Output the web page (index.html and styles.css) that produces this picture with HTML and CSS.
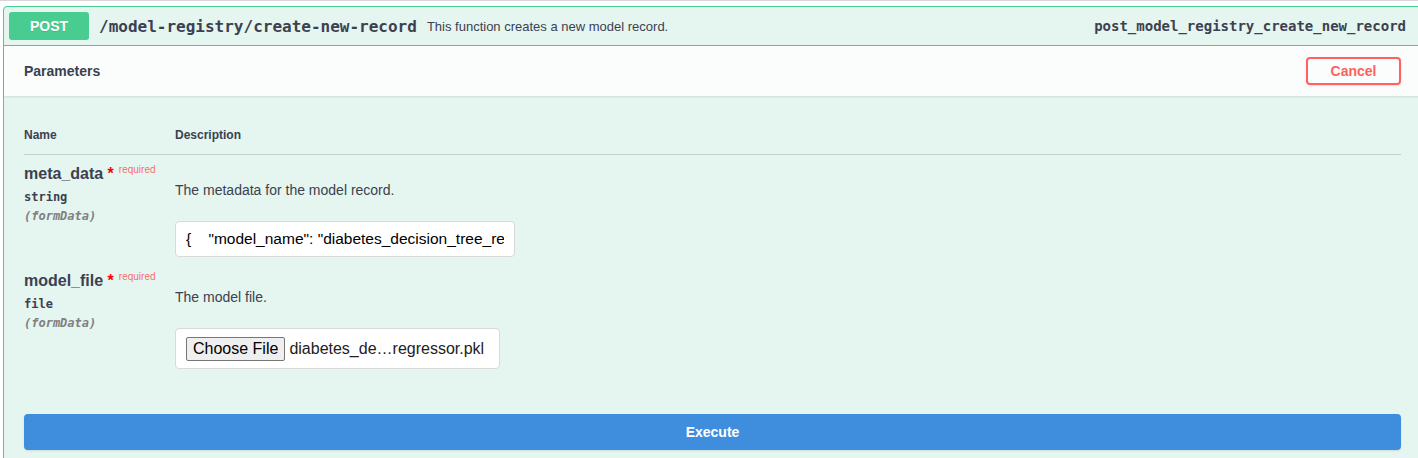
FILE: index.html
```html
<!DOCTYPE html>
<html>
<head>
<meta charset="utf-8">
<link rel="stylesheet" href="styles.css">
</head>
<body>
<div class="topline"></div>
<div class="opblock">
  <div class="summary">
    <span class="method">POST</span>
    <span class="path">/model-registry/create-new-record</span>
    <span class="summary-desc">This function creates a new model record.</span>
    <span class="opid">post_model_registry_create_new_record</span>
  </div>
  <div class="section-header">
    <h4 class="section-title">Parameters</h4>
    <button class="btn-cancel">Cancel</button>
  </div>
  <div class="table-container">
    <div class="thead">
      <div class="col-name th">Name</div>
      <div class="col-desc th">Description</div>
    </div>
    <div class="row">
      <div class="col-name">
        <div class="param-name">meta_data<span class="star">&nbsp;*</span><span class="req">required</span></div>
        <div class="param-type">string</div>
        <div class="param-in">(formData)</div>
      </div>
      <div class="col-desc">
        <p class="desc">The metadata for the model record.</p>
        <div class="text-input"><span class="text-value">{&nbsp;&nbsp;&nbsp;&nbsp;"model_name": "diabetes_decision_tree_regressor"</span></div>
      </div>
    </div>
    <div class="row">
      <div class="col-name">
        <div class="param-name">model_file<span class="star">&nbsp;*</span><span class="req">required</span></div>
        <div class="param-type">file</div>
        <div class="param-in">(formData)</div>
      </div>
      <div class="col-desc">
        <p class="desc">The model file.</p>
        <div class="file-input"><span class="choose">Choose File</span><span class="fname">diabetes_de…regressor.pkl</span></div>
      </div>
    </div>
  </div>
  <div class="execute-wrapper">
    <button class="btn-execute">Execute</button>
  </div>
</div>
</body>
</html>
```

FILE: styles.css
```css
html, body {
  margin: 0;
  padding: 0;
  overflow: hidden;
  background: #ffffff;
  font-family: "Liberation Sans", Arial, sans-serif;
  color: #3b4151;
}
.topline {
  height: 1px;
  background: #d6d6d6;
}
.opblock {
  margin: 5px 0 0 3px;
  width: 1417px;
  min-height: 470px;
  border: 1px solid #49cc90;
  border-radius: 4px;
  background: #e5f5ef;
}
.summary {
  display: flex;
  align-items: center;
  padding: 5px;
  border-bottom: 1px solid #49cc90;
}
.method {
  width: 80px;
  height: 28px;
  display: flex;
  align-items: center;
  justify-content: center;
  background: #49cc90;
  color: #fff;
  border-radius: 3px;
  font-size: 14px;
  font-weight: 700;
  text-shadow: 0 1px 0 rgba(0,0,0,.1);
}
.path {
  padding: 0 10px;
  font-family: "DejaVu Sans Mono", monospace;
  font-size: 16px;
  font-weight: 700;
  color: #3b4151;
}
.summary-desc {
  font-size: 13px;
  color: #3b4151;
  flex: 1;
}
.opid {
  font-family: "DejaVu Sans Mono", monospace;
  font-size: 14px;
  font-weight: 700;
  padding: 0 10px;
  color: #3b4151;
}
.section-header {
  display: flex;
  align-items: center;
  justify-content: space-between;
  min-height: 50px;
  padding: 0 20px;
  background: rgba(255,255,255,.8);
  box-shadow: 0 1px 2px rgba(0,0,0,.1);
  box-sizing: border-box;
}
.section-title {
  margin: 0;
  font-size: 14px;
  font-weight: 700;
  color: #3b4151;
}
.btn-cancel {
  width: 95px;
  height: 28px;
  border: 2px solid #ff6060;
  border-radius: 4px;
  background: transparent;
  color: #ff6060;
  font-family: "Liberation Sans", Arial, sans-serif;
  font-size: 14px;
  font-weight: 700;
  padding: 0;
  box-shadow: 0 1px 2px rgba(0,0,0,.1);
}
.table-container {
  padding: 20px 20px 0 20px;
}
.thead {
  display: flex;
  border-bottom: 1px solid rgba(59,65,81,.2);
  height: 38px;
  align-items: center;
}
.th {
  font-size: 12px;
  font-weight: 700;
  color: #3b4151;
}
.col-name {
  width: 151px;
  flex: none;
}
.col-desc {
  flex: 1;
}
.row {
  display: flex;
  padding: 10px 0 0 0;
}
.param-name {
  font-size: 16px;
  font-weight: 700;
  line-height: 18px;
  color: #3b4151;
  white-space: nowrap;
}
.star {
  color: red;
  font-size: 16px;
}
.req {
  font-size: 10px;
  font-weight: 400;
  color: rgba(255,0,0,.6);
  position: relative;
  top: -6px;
  padding-left: 5px;
}
.param-type {
  font-family: "DejaVu Sans Mono", monospace;
  font-size: 12px;
  font-weight: 700;
  line-height: 14px;
  padding: 5px 0;
  color: #3b4151;
}
.param-in {
  font-family: "DejaVu Sans Mono", monospace;
  font-size: 12px;
  font-style: italic;
  font-weight: 700;
  line-height: 14px;
  color: #808080;
}
.desc {
  margin: 16px 0 21px 0;
  font-size: 14px;
  line-height: 19px;
  color: #3b4151;
}
.text-input {
  width: 340px;
  height: 36px;
  box-sizing: border-box;
  padding: 0 10px;
  display: flex;
  align-items: center;
  background: #fff;
  border: 1px solid #d9d9d9;
  border-radius: 4px;
  margin-bottom: 5px;
}
.text-value {
  flex: 1;
  min-width: 0;
  overflow: hidden;
  white-space: nowrap;
  font-size: 15.5px;
  color: #000;
}
.file-input {
  width: 325px;
  height: 41px;
  box-sizing: border-box;
  padding: 0 10px;
  display: flex;
  align-items: center;
  background: #fff;
  border: 1px solid #d9d9d9;
  border-radius: 4px;
  white-space: nowrap;
  overflow: hidden;
  margin-bottom: 5px;
}
.choose {
  height: 24px;
  box-sizing: border-box;
  padding: 0 6px;
  display: flex;
  align-items: center;
  background: #efefef;
  border: 1px solid #767676;
  border-radius: 2px;
  font-size: 16px;
  color: #000;
}
.fname {
  margin-left: 4px;
  font-size: 16px;
  color: #222;
}
.execute-wrapper {
  padding: 40px 20px 0 20px;
}
.btn-execute {
  width: 100%;
  height: 36px;
  border: 2px solid #3f8ddd;
  border-radius: 4px;
  background: #3f8ddd;
  color: #fff;
  font-family: "Liberation Sans", Arial, sans-serif;
  font-size: 14px;
  font-weight: 700;
  box-shadow: 0 1px 2px rgba(0,0,0,.1);
}
```
